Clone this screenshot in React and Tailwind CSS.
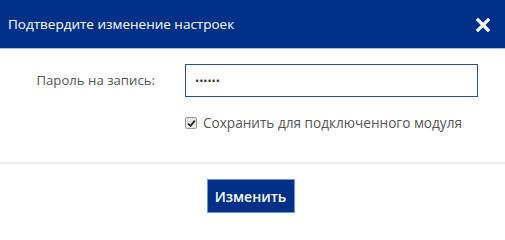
import React from 'react';

export default function App() {
  return (
    <div className="w-[505px] h-[225px] bg-white font-['Open_Sans',_'Noto_Sans',_Arial,_sans-serif]">
      {/* Заголовок */}
      <div className="h-[49px] bg-[#003087] border-b border-[#a9bde3] flex items-center justify-between pl-[8px] pr-[15px]">
        <span className="text-white text-[13.5px] leading-none pt-[1px]">Подтвердите изменение настроек</span>
        <svg width="14" height="14" viewBox="0 0 14 14" className="mt-[2px]">
          <path d="M2 2 L12 12 M12 2 L2 12" stroke="#fff" strokeWidth="3.2" strokeLinecap="square" />
        </svg>
      </div>

      {/* Поля */}
      <div className="pt-[15px] pb-[29px] border-b-2 border-[#ececec]">
        <div className="flex items-center">
          <label className="w-[155px] text-right text-[13.2px] text-[#555]">Пароль на запись:</label>
          <input
            type="password"
            defaultValue="123456"
            className="ml-[30px] w-[293px] h-[33px] border border-[#2e4f95] px-[9px] text-[11px] text-[#333] outline-none"
          />
        </div>
        <div className="flex items-center ml-[185px] mt-[16px]">
          <span className="w-[12px] h-[12px] border border-[#9a9a9a] bg-[#e6e6e6] rounded-[2px] flex items-center justify-center">
            <svg width="9" height="9" viewBox="0 0 9 9">
              <path d="M1.2 4.6 L3.5 7 L7.8 1.6" stroke="#222" strokeWidth="1.8" fill="none" />
            </svg>
          </span>
          <span className="ml-[6px] text-[13.6px] text-[#555]">Сохранить для подключенного модуля</span>
        </div>
      </div>

      {/* Кнопка */}
      <div className="flex justify-center pt-[15px] pr-[4px]">
        <button className="w-[88px] h-[34px] bg-[#003087] border border-[#6d92d6] text-white text-[14px] font-semibold">
          Изменить
        </button>
      </div>
    </div>
  );
}
